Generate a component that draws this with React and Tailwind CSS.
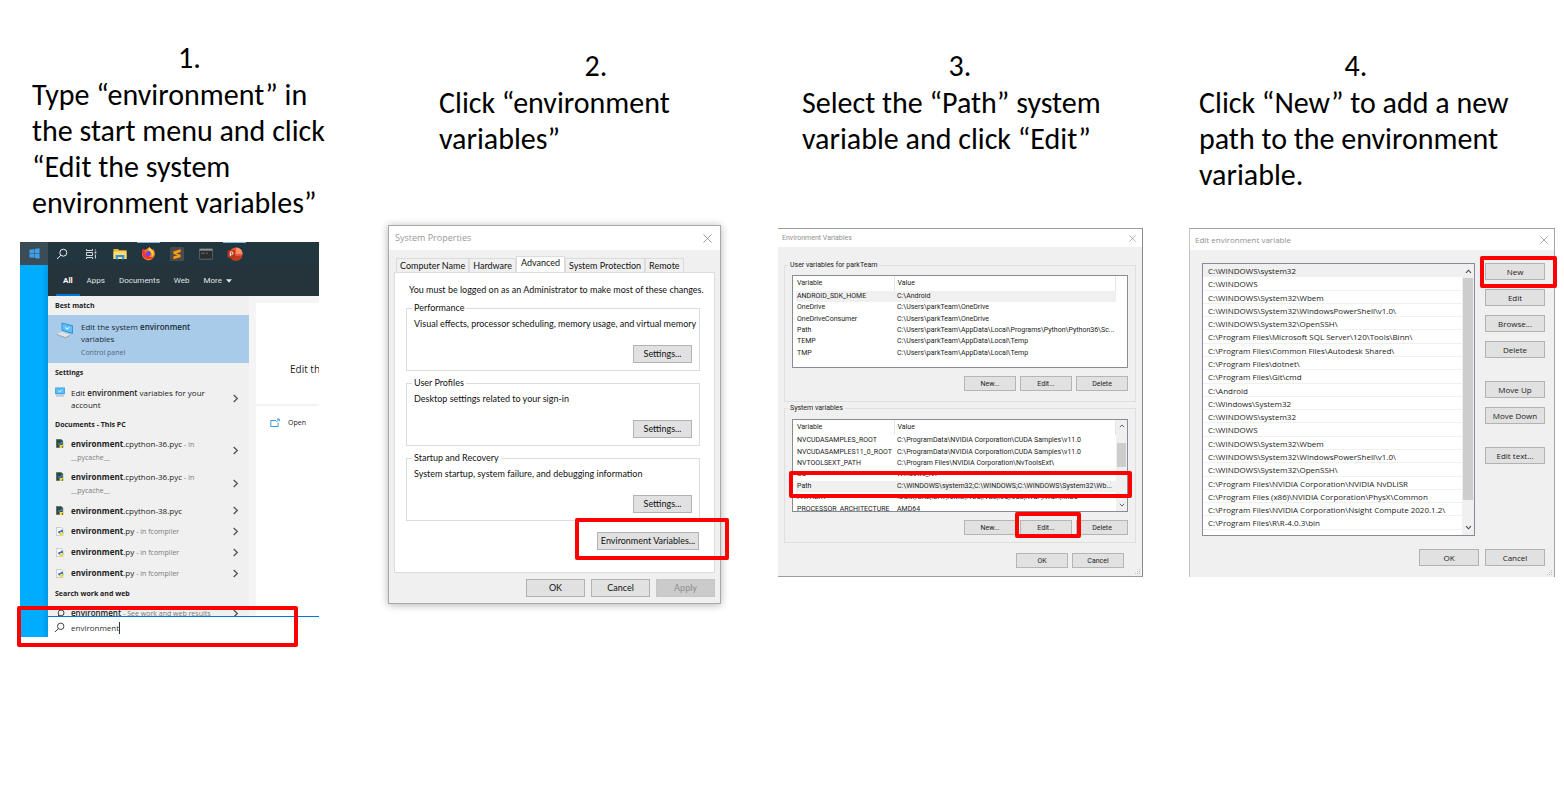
import React from 'react';

const RED = 'pointer-events-none absolute rounded-xs border-4 border-[#fe0000]';

function Caption({ number, className, children }) {
  return (
    <div className={`font-['Carlito','Lato',sans-serif] text-[30px] leading-9 text-black ${className}`}>
      <p className="pb-px text-center">{number}</p>
      <p className="whitespace-nowrap">{children}</p>
    </div>
  );
}

function Close({ className = '' }) {
  return (
    <button type="button" aria-label="Close" className={`text-[#8a8a8a] ${className}`}>
      <svg viewBox="0 0 10 10" className="block size-full" fill="none" stroke="currentColor" strokeWidth="0.9">
        <path d="M0.5 0.5 9.5 9.5M9.5 0.5 0.5 9.5" />
      </svg>
    </button>
  );
}

function Chevron({ dir, className }) {
  const paths = { right: 'M3 1l4 4-4 4', up: 'M1.5 7 5 3.2 8.5 7', down: 'M1.5 3 5 6.8 8.5 3' };
  return (
    <svg viewBox="0 0 10 10" className={`shrink-0 ${className}`} fill="none" stroke="currentColor" strokeWidth="1.5">
      <path d={paths[dir]} />
    </svg>
  );
}

function Grip() {
  return (
    <svg viewBox="0 0 8 8" className="absolute right-0 bottom-0 size-2" fill="#bdbdbd">
      <path d="M5 5h1v1H5zM3 5h1v1H3zM1 5h1v1H1zM5 3h1v1H5zM3 3h1v1H3zM5 1h1v1H5z" />
    </svg>
  );
}

function Magnifier({ className }) {
  return (
    <svg viewBox="0 0 12 12" className={`shrink-0 ${className}`} fill="none" stroke="currentColor" strokeWidth="1">
      <circle cx="7.3" cy="4.7" r="3.5" />
      <path d="M4.8 7.2 1 11" />
    </svg>
  );
}

/* ---------- Start menu ---------- */

function WindowsLogo() {
  return (
    <svg viewBox="0 0 12 12" className="size-[11px]" fill="#3ea0ea">
      <path d="M0.5 2 5.4 1.3V5.7H0.5zM6 1.2 11.5 0.4V5.7H6zM0.5 6.3H5.4V10.7L0.5 10zM6 6.3H11.5V11.6L6 10.8z" />
    </svg>
  );
}

function TaskView() {
  return (
    <svg viewBox="0 0 12 12" className="size-3" fill="none" stroke="#d5dadd" strokeWidth="1">
      <path d="M1.5 1v1.5h6V1M1.5 4.5h6v3h-6zM1.5 11V9.5h6V11" />
      <path d="M10.4 1.5v1M10.4 6.5v4" />
      <path d="M9.6 4.5h1.7" strokeWidth="1.8" />
    </svg>
  );
}

function Folder() {
  return (
    <svg viewBox="0 0 14 12" className="h-3 w-[14px]">
      <path d="M0.5 1h4.6l1 1.2h7.4V11H0.5z" fill="#f3b52d" />
      <path d="M0.5 3.4h13V11H0.5z" fill="#ffdc75" />
      <path d="M2.7 7h8.6v4.4H9.2V9H4.8v2.4H2.7z" fill="#2d8fe0" />
    </svg>
  );
}

function Firefox() {
  return (
    <svg viewBox="0 0 16 16" className="size-[15px]">
      <path d="M8.8 0.8c0.8 1.6 2.6 2 3.4 3.6 0.4-0.4 0.4-1 0.2-1.5 2 1.8 2.8 4.6 2.2 7A6.9 6.9 0 0 1 1 8.4C1 6 1.6 4 2.8 2.8c0 0.8 0.2 1.2 0.6 1.5C4 3.8 4.8 3.6 5.6 3.9 6.6 2.2 8.5 2.2 8.8 0.8z" fill="#ff8a1e" />
      <path d="M1.2 7.5C1.4 5 2 3.6 2.8 2.8c0 0.8 0.2 1.2 0.6 1.5L5 7l5 5 3.2-0.4A6.9 6.9 0 0 1 1.2 7.5z" fill="#f5333f" />
      <path d="M9 1.2c0.8 1.6 2.6 2 3.4 3.6 1.4 2 1.6 4.4-0.2 6.6C12 7 9 6.6 8 4.6 7.8 3.6 8.6 2.6 9 1.2z" fill="#ffd43a" />
      <circle cx="7.6" cy="8" r="2.9" fill="#7542e5" />
      <path d="M3.6 5.2c1.2-0.6 2.4 0 3.8 0.2 0.2 1-1.4 1.1-1.8 1.9-0.2 0.6 0 1-0.6 1.4C4.2 8.2 3.4 6.6 3.6 5.2z" fill="#ff5a2c" />
    </svg>
  );
}

function Sublime() {
  return (
    <svg viewBox="0 0 14 14" className="size-[14px]">
      <rect width="14" height="14" rx="1.5" fill="#4b4b4b" />
      <path d="M3.4 4.6 10.6 2.3V5L6.2 6.4l4.4 1.3v2.4L3.4 12.2V9.6L7.6 8.3 3.4 7z" fill="#ff9c12" />
    </svg>
  );
}

function Terminal() {
  return (
    <svg viewBox="0 0 14 12" className="h-3 w-[14px]">
      <rect x="0.3" y="0.8" width="13.4" height="10.4" rx="0.6" fill="#2a2c2e" stroke="#83898d" strokeWidth="0.6" />
      <path d="M0.6 1.1h12.8v1.5H0.6z" fill="#9aa0a4" />
      <path d="M2 5.2h4M7 5.2h2" stroke="#7c8286" strokeWidth="0.8" />
    </svg>
  );
}

function PowerPoint() {
  return (
    <svg viewBox="0 0 16 14" className="h-[14px] w-4">
      <circle cx="9" cy="7" r="6.6" fill="#e2583a" />
      <path d="M9 0.4A6.6 6.6 0 0 1 15.6 7H9z" fill="#ff8f6b" />
      <path d="M2.8 9h12.5A6.6 6.6 0 0 1 9 13.6 6.6 6.6 0 0 1 2.8 9z" fill="#c13a1e" />
      <rect x="0.5" y="3.2" width="7.6" height="7.6" rx="0.7" fill="#b7331a" />
      <path d="M3.3 9.2V4.9h1.4a1.25 1.25 0 0 1 0 2.7H3.3" fill="none" stroke="#fff" strokeWidth="0.9" />
    </svg>
  );
}

function SystemIcon() {
  return (
    <svg viewBox="0 0 18 18" className="size-[18px] shrink-0">
      <path d="M5.6 1.5 16.8 4.5V13L5.6 9.6z" fill="#2187d0" />
      <path d="M6.4 2.6 16 5.2v6.6L6.4 9z" fill="#5cc1fb" />
      <path d="M9.5 6.3 11 8.2l2.6-2" fill="none" stroke="#fff" strokeWidth="1" />
      <path d="M0.6 13 5.4 11l8.8 2.8-4.6 2.4z" fill="#e2e2e2" />
      <path d="M0.6 13 9.6 16.2 14.2 13.8v1L9.6 17.4 0.6 14z" fill="#a3a7aa" />
    </svg>
  );
}

function MonitorIcon() {
  return (
    <svg viewBox="0 0 10 10" className="size-[10px] shrink-0">
      <rect x="0.2" y="0.5" width="9.6" height="6.8" fill="#2b94de" />
      <rect x="0.9" y="1.2" width="8.2" height="5.2" fill="#57bdf8" />
      <path d="M3.2 3.8 4.6 5.2 7 2.6" fill="none" stroke="#fff" strokeWidth="0.9" />
      <path d="M1 8.4h8v1H1z" fill="#a5abb0" />
    </svg>
  );
}

function PythonFile({ dark }) {
  return (
    <svg viewBox="0 0 8 9" className="ml-[1px] h-[9px] w-2 shrink-0">
      <path d="M0.4 0.4h4.8l1.6 1.6v6.6H0.4z" fill={dark ? '#2f4a3d' : '#fafafa'} stroke={dark ? '#2f4a3d' : '#9a9fa3'} strokeWidth="0.5" />
      <path d="M4.6 2.8h1.6c0.6 0 0.8 0.4 0.8 1v1.4H5c-0.8 0-1 0.4-1 1.2H3c-0.6 0-0.8-0.6-0.8-1.4S2.4 4 3 4h1.6z" fill="#3b79b3" />
      <path d="M7 4.6h0.4c0.4 0 0.6 0.5 0.6 1.3S7.8 7 7.4 7H6v1.2c0 0.5-0.4 0.8-1 0.8H4.4c-0.6 0-0.8-0.4-0.8-1V6.8c0-0.6 0.4-0.8 1-0.8H6c0.6 0 1-0.4 1-1z" fill="#ffd63f" />
    </svg>
  );
}

const TASKBAR = [
  { label: 'Search', icon: <Magnifier className="size-3 text-[#e8ecee]" /> },
  { label: 'Task View', icon: <TaskView /> },
  { label: 'File Explorer', icon: <Folder /> },
  { label: 'Firefox', icon: <Firefox />, active: true },
  { label: 'Sublime Text', icon: <Sublime /> },
  { label: 'Command Prompt', icon: <Terminal /> },
  { label: 'PowerPoint', icon: <PowerPoint />, active: true },
];

function Heading({ children }) {
  return <h3 className="flex h-[19px] items-center pt-[1px] pl-[7px] text-[7px] font-bold text-[#222]">{children}</h3>;
}

function Result({ icon, tall, children }) {
  return (
    <button type="button" className={`flex w-full items-center pr-[9px] pl-[7px] text-left text-[8px] leading-3 text-[#222] ${tall ? 'h-[33px]' : 'h-[21px]'}`}>
      <span className={`w-4 shrink-0 ${tall ? 'self-start pt-[5px]' : ''}`}>{icon}</span>
      <span className="min-w-0 flex-1">{children}</span>
      <Chevron dir="right" className="size-[9px] text-[#555]" />
    </button>
  );
}

function Muted({ children }) {
  return <span className="text-[7px] text-[#7b7b7b]">{children}</span>;
}

function StartMenu() {
  return (
    <div className="relative mr-[69px] font-['Open_Sans','Noto_Sans',sans-serif]">
      <div className="flex h-[395px] flex-col overflow-hidden bg-white">
        <div className="flex h-[23px] shrink-0 bg-[#223640]">
          <button type="button" aria-label="Start" className="flex w-7 items-center justify-center bg-[#3b4c56]">
            <WindowsLogo />
          </button>
          <div className="grid w-[201px] grid-cols-7">
            {TASKBAR.map((t) => (
              <button key={t.label} type="button" aria-label={t.label} className="relative flex items-center justify-center">
                {t.active && <span className="absolute inset-x-[3px] top-0 h-px bg-[#79b9ec]" />}
                {t.icon}
              </button>
            ))}
          </div>
        </div>
        <div className="flex min-h-0 flex-1">
          <div className="w-7 shrink-0 bg-linear-to-r from-[#00acfe] from-80% to-[#0399e4]" />
          <div className="flex min-w-0 flex-1 flex-col">
            <div className="flex h-[31px] shrink-0 items-center gap-[14px] bg-[#25333b] pl-[15px] font-['Roboto',sans-serif] text-[8px] text-[#dfe3e5]">
              <button type="button" className="relative flex h-full items-center font-bold text-white">
                All
                <span className="absolute -inset-x-[7px] bottom-0 h-[2px] bg-[#0078d7]" />
              </button>
              <button type="button">Apps</button>
              <button type="button">Documents</button>
              <button type="button">Web</button>
              <button type="button" className="flex items-center gap-1">
                More
                <svg viewBox="0 0 6 4" className="h-1 w-[6px]" fill="currentColor"><path d="M0 0.2h6L3 3.8z" /></svg>
              </button>
            </div>
            <div className="flex min-h-0 flex-1">
              <div className="w-[201px] shrink-0 overflow-hidden bg-[#f0f0f0]">
                <Heading>Best match</Heading>
                <button type="button" className="flex h-12 w-full bg-[#a7cbe8] pt-[6px] pl-2 text-left text-[8px] leading-3 text-[#1c2a35]">
                  <SystemIcon />
                  <span className="pl-[7px]">
                    Edit the system <b className="font-semibold">environment</b>
                    <br />
                    variables
                    <span className="block pt-[2px] text-[7px] text-[#53687a]">Control panel</span>
                  </span>
                </button>
                <Heading>Settings</Heading>
                <Result tall icon={<MonitorIcon />}>
                  Edit <b className="font-semibold">environment</b> variables for your
                  <br />
                  account
                </Result>
                <Heading>Documents - This PC</Heading>
                {[0, 1].map((i) => (
                  <Result key={i} tall icon={<PythonFile dark />}>
                    <b className="font-bold">environment</b><span className="font-medium">.cpython-36.pyc</span> <Muted>- in</Muted>
                    <br />
                    <Muted>__pycache__</Muted>
                  </Result>
                ))}
                <Result icon={<PythonFile dark />}>
                  <b className="font-bold">environment</b><span className="font-medium">.cpython-38.pyc</span>
                </Result>
                {[0, 1, 2].map((i) => (
                  <Result key={i} icon={<PythonFile />}>
                    <b className="font-bold">environment</b><span className="font-medium">.py</span> <Muted>- in fcompiler</Muted>
                  </Result>
                ))}
                <Heading>Search work and web</Heading>
                <Result icon={<Magnifier className="size-[10px]" />}>
                  <b className="font-semibold">environment</b> <Muted>- See work and web results</Muted>
                </Result>
              </div>
              <div className="flex min-w-0 flex-1 flex-col bg-[#f5f5f5] pt-[7px] pl-[7px] text-[#222]">
                <div className="flex-1 bg-white">
                  <div className="h-[103px] overflow-hidden border-b-2 border-[#f3f3f3] pt-[58px] pl-[34px] text-[10px] leading-4 whitespace-nowrap">
                    Edit th
                  </div>
                  <button type="button" className="flex items-center gap-2 pt-[11px] pl-[14px] text-[7px] leading-3">
                    <svg viewBox="0 0 10 10" className="size-[10px]" fill="none" stroke="#2a8fdd" strokeWidth="0.9">
                      <path d="M6 2.5H0.8v6h7.4V4.5M6.5 4 9 1.3M7 1h2.3v2.3" />
                    </svg>
                    Open
                  </button>
                </div>
              </div>
            </div>
            <div className="flex h-[21px] shrink-0 items-center border-t border-[#0078d7] bg-white pt-[1px] pl-[6px] text-[#333]">
              <Magnifier className="mr-[6px] size-[11px]" />
              <input aria-label="Search" defaultValue="environment" className="field-sizing-content border-r border-[#333] text-[8px] leading-3 outline-none" />
            </div>
          </div>
        </div>
      </div>
      <span className={`${RED} -bottom-[10px] -left-[3px] h-[41px] w-[281px]`} />
    </div>
  );
}

/* ---------- System Properties ---------- */

function SysButton({ className = 'w-[59px]', disabled, children }) {
  return (
    <button
      type="button"
      disabled={disabled}
      className={`h-[18px] shrink-0 border text-[9px] leading-3 ${disabled ? 'border-[#c6c6c6] bg-[#cbcbcb] text-[#8f8f8f]' : 'border-[#b2b2b2] bg-[#e1e1e1] text-[#111]'} ${className}`}
    >
      {children}
    </button>
  );
}

const GROUPS = [
  ['Performance', 'Visual effects, processor scheduling, memory usage, and virtual memory'],
  ['User Profiles', 'Desktop settings related to your sign-in'],
  ['Startup and Recovery', 'System startup, system failure, and debugging information'],
];

const TABS = ['Computer Name', 'Hardware', 'Advanced', 'System Protection', 'Remote'];

function SystemProperties() {
  return (
    <div className="mr-[57px] border border-[#a9a9a9] bg-[#f0f0f0] font-['Lato',Arial,sans-serif] text-[9px] leading-3 text-[#111] shadow-[0_1px_8px_rgba(0,0,0,0.3)]">
      <div className="flex h-6 items-center justify-between bg-white pr-2 pl-[6px]">
        <h2 className="font-['Open_Sans',sans-serif] text-[9px] text-[#9a9a9a]">System Properties</h2>
        <Close className="size-[9px]" />
      </div>
      <div className="px-[5px] pt-[6px] pb-[6px]">
        <div role="tablist" className="flex items-end pl-[2px]">
          {TABS.map((t) => (
            <button
              key={t}
              type="button"
              role="tab"
              aria-selected={t === 'Advanced'}
              className={`border border-b-0 border-[#dcdcdc] ${t === 'Advanced' ? 'h-4 bg-white px-1 pb-1' : 'h-[14px] bg-[#f0f0f0] px-[3px]'}`}
            >
              {t}
            </button>
          ))}
        </div>
        <div role="tabpanel" className="border border-[#dcdcdc] bg-white px-[11px] pt-[11px] pb-[22px]">
          <p className="px-[3px] whitespace-nowrap">You must be logged on as an Administrator to make most of these changes.</p>
          <div className="flex flex-col gap-[6px] pt-[6px] pr-[3px]">
            {GROUPS.map(([title, text]) => (
              <fieldset key={title} className="h-[69px] min-w-0 border border-[#dcdcdc] px-[7px]">
                <legend className="-ml-[2px] px-[2px]">{title}</legend>
                <p className="pt-1 whitespace-nowrap">{text}</p>
                <div className="flex justify-end pt-[15px]">
                  <SysButton>Settings...</SysButton>
                </div>
              </fieldset>
            ))}
          </div>
          <div className="flex justify-end pt-[11px] pr-1">
            <div className="relative flex">
              <SysButton className="w-[102px]">Environment Variables...</SysButton>
              <span className={`${RED} -top-[14px] -left-[22px] h-[42px] w-[154px]`} />
            </div>
          </div>
        </div>
        <div className="flex justify-end gap-[6px] pt-[6px]">
          <SysButton>OK</SysButton>
          <SysButton>Cancel</SysButton>
          <SysButton disabled>Apply</SysButton>
        </div>
      </div>
    </div>
  );
}

/* ---------- Environment Variables ---------- */

const USER_VARS = [
  ['ANDROID_SDK_HOME', 'C:\\Android'],
  ['OneDrive', 'C:\\Users\\parkTeam\\OneDrive'],
  ['OneDriveConsumer', 'C:\\Users\\parkTeam\\OneDrive'],
  ['Path', 'C:\\Users\\parkTeam\\AppData\\Local\\Programs\\Python\\Python36\\Sc...'],
  ['TEMP', 'C:\\Users\\parkTeam\\AppData\\Local\\Temp'],
  ['TMP', 'C:\\Users\\parkTeam\\AppData\\Local\\Temp'],
];

const SYSTEM_VARS = [
  ['NVCUDASAMPLES_ROOT', 'C:\\ProgramData\\NVIDIA Corporation\\CUDA Samples\\v11.0'],
  ['NVCUDASAMPLES11_0_ROOT', 'C:\\ProgramData\\NVIDIA Corporation\\CUDA Samples\\v11.0'],
  ['NVTOOLSEXT_PATH', 'C:\\Program Files\\NVIDIA Corporation\\NvToolsExt\\'],
  ['OS', 'Windows_NT'],
  ['Path', 'C:\\WINDOWS\\system32;C:\\WINDOWS;C:\\WINDOWS\\System32\\Wb...'],
  ['PATHEXT', '.COM;.EXE;.BAT;.CMD;.VBS;.VBE;.JS;.JSE;.WSF;.WSH;.MSC'],
  ['PROCESSOR_ARCHITECTURE', 'AMD64'],
];

function EnvButton({ children }) {
  return (
    <button type="button" className="h-[15px] w-[52px] border border-[#b5b5b5] bg-[#e1e1e1] text-[7px] leading-3">
      {children}
    </button>
  );
}

function VarTable({ rows, selected, tableClass, scroll, label }) {
  return (
    <div className="relative flex h-[93px] border border-[#868b94] bg-white">
      <div className="min-w-0 flex-1 overflow-hidden pl-[3px]">
        <table aria-label={label} className={`w-full table-fixed border-collapse text-left whitespace-nowrap ${tableClass}`}>
          <thead>
            <tr className="h-[15px]">
              <th className="w-[98px] border-r border-[#e5e5e5] p-0 pl-px font-normal">Variable</th>
              <th className="border-r border-[#e5e5e5] p-0 pl-[3px] font-normal">Value</th>
            </tr>
          </thead>
          <tbody>
            {rows.map(([k, v]) => (
              <tr key={k} className={k === selected ? 'bg-[#f0f0f0]' : ''}>
                <td className="p-0 pl-px">{k}</td>
                <td className="p-0 pl-[3px]">{v}</td>
              </tr>
            ))}
          </tbody>
        </table>
      </div>
      <div className={`flex w-[11px] shrink-0 flex-col items-center justify-between py-[3px] text-[#555] ${scroll ? 'bg-[#f0f0f0]' : ''}`}>
        {scroll && (
          <>
            <Chevron dir="up" className="size-[6px]" />
            <span className="mb-[22px] h-6 w-[9px] bg-[#cdcdcd]" />
            <Chevron dir="down" className="size-[6px]" />
          </>
        )}
      </div>
      {scroll && <span className={`${RED} -right-[5px] -left-1 top-[51px] h-[27px]`} />}
    </div>
  );
}

function EnvironmentVariables() {
  return (
    <div className="relative mr-[46px] h-[349px] border-t border-r border-b border-t-[#9c9c9c] border-r-[#8a8a8a] border-b-[#9c9c9c] bg-[#f0f0f0] font-['Roboto','Open_Sans',sans-serif] text-[7px] leading-[11px] text-[#222]">
      <div className="flex h-[18px] items-center justify-between bg-white pr-[6px] pl-1">
        <h2 className="text-[#8f8f8f]">Environment Variables</h2>
        <Close className="size-[7px]" />
      </div>
      <div className="px-[6px] pt-[13px]">
        <fieldset className="h-[142px] border border-[#dfdfdf] px-[7px]">
          <legend className="-ml-1 px-[2px]">User variables for parkTeam</legend>
          <div className="pt-[4px]">
            <VarTable rows={USER_VARS} selected="ANDROID_SDK_HOME" tableClass="h-[83px]" label="User variables" />
          </div>
          <div className="flex justify-end gap-1 pt-2">
            <EnvButton>New...</EnvButton>
            <EnvButton>Edit...</EnvButton>
            <EnvButton>Delete</EnvButton>
          </div>
        </fieldset>
        <fieldset className="mt-[1px] h-[140px] border border-[#dfdfdf] px-[7px]">
          <legend className="-ml-1 px-[2px]">System variables</legend>
          <div className="pt-[5px]">
            <VarTable rows={SYSTEM_VARS} selected="Path" tableClass="h-[95px]" scroll label="System variables" />
          </div>
          <div className="flex justify-end gap-1 pt-2">
            <EnvButton>New...</EnvButton>
            <span className="relative flex">
              <EnvButton>Edit...</EnvButton>
              <span className={`${RED} -right-[9px] -left-[5px] -top-2 h-[26px]`} />
            </span>
            <EnvButton>Delete</EnvButton>
          </div>
        </fieldset>
        <div className="flex justify-end gap-1 pt-[10px] pr-3">
          <EnvButton>OK</EnvButton>
          <EnvButton>Cancel</EnvButton>
        </div>
      </div>
      <Grip />
    </div>
  );
}

/* ---------- Edit environment variable ---------- */

const PATHS = [
  'C:\\WINDOWS\\system32',
  'C:\\WINDOWS',
  'C:\\WINDOWS\\System32\\Wbem',
  'C:\\WINDOWS\\System32\\WindowsPowerShell\\v1.0\\',
  'C:\\WINDOWS\\System32\\OpenSSH\\',
  'C:\\Program Files\\Microsoft SQL Server\\120\\Tools\\Binn\\',
  'C:\\Program Files\\Common Files\\Autodesk Shared\\',
  'C:\\Program Files\\dotnet\\',
  'C:\\Program Files\\Git\\cmd',
  'C:\\Android',
  'C:\\Windows\\System32',
  'C:\\WINDOWS\\system32',
  'C:\\WINDOWS',
  'C:\\WINDOWS\\System32\\Wbem',
  'C:\\WINDOWS\\System32\\WindowsPowerShell\\v1.0\\',
  'C:\\WINDOWS\\System32\\OpenSSH\\',
  'C:\\Program Files\\NVIDIA Corporation\\NVIDIA NvDLISR',
  'C:\\Program Files (x86)\\NVIDIA Corporation\\PhysX\\Common',
  'C:\\Program Files\\NVIDIA Corporation\\Nsight Compute 2020.1.2\\',
  'C:\\Program Files\\R\\R-4.0.3\\bin',
  'C:\\Program Files\\NVIDIA GPU Computing Toolkit\\CUDA\\v11.0\\',
];

function EditButton({ className = '', children }) {
  return (
    <button type="button" className={`h-[17px] w-[60px] border border-[#b2b2b2] bg-[#e1e1e1] text-[8px] leading-3 ${className}`}>
      {children}
    </button>
  );
}

function EditVariable() {
  return (
    <div className="relative mr-[9px] h-[349px] border border-b-0 border-[#a3a3a3] border-l-[#c4c4c4] bg-[#f0f0f0] font-['Open_Sans','Noto_Sans',sans-serif] text-[8px] leading-3 text-[#222]">
      <div className="flex h-[21px] items-center justify-between bg-white pr-[6px] pl-[5px]">
        <h2 className="text-[#8f8f8f]">Edit environment variable</h2>
        <Close className="size-2" />
      </div>
      <div className="flex gap-[10px] pt-[13px] pr-[9px] pl-3">
        <div className="flex h-[273px] min-w-0 flex-1 border border-[#868b94] bg-white">
          <ul className="flex h-[279px] min-w-0 flex-1 flex-col self-start leading-[14px] [clip-path:inset(0_0_8px_0)]">
            {PATHS.map((p, i) => (
              <li key={i} className={`min-h-0 flex-1 basis-0 border-b border-[#f0f0f0] pl-[5px] whitespace-nowrap ${i === 0 ? 'bg-[#f0f0f0]' : ''}`}>
                {p}
              </li>
            ))}
          </ul>
          <div className="flex w-3 flex-col items-center bg-[#f0f0f0] py-1 text-[#444]">
            <Chevron dir="up" className="size-[7px]" />
            <span className="mt-[3px] mb-auto h-[222px] w-[10px] bg-[#cdcdcd]" />
            <Chevron dir="down" className="size-[7px]" />
          </div>
        </div>
        <div className="flex flex-col gap-[9px]">
          <span className="relative flex">
            <EditButton>New</EditButton>
            <span className={`${RED} -top-[7px] -left-[5px] h-8 w-[77px]`} />
          </span>
          <EditButton>Edit</EditButton>
          <EditButton>Browse...</EditButton>
          <EditButton>Delete</EditButton>
          <EditButton className="mt-[14px]">Move Up</EditButton>
          <EditButton>Move Down</EditButton>
          <EditButton className="mt-[14px]">Edit text...</EditButton>
        </div>
      </div>
      <div className="flex justify-end gap-[6px] pt-[13px] pr-[9px]">
        <EditButton>OK</EditButton>
        <EditButton>Cancel</EditButton>
      </div>
      <Grip />
    </div>
  );
}

export default function App() {
  return (
    <main className="grid min-h-screen grid-cols-[minmax(0,368fr)_minmax(0,390fr)_minmax(0,411fr)_minmax(0,375fr)] items-start bg-white pl-5">
      <section>
        <Caption number="1." className="min-h-[242px] pt-10 pr-[41px] pl-3">
          Type “environment” in<br />the start menu and click<br />“Edit the system<br />environment variables”
        </Caption>
        <StartMenu />
      </section>
      <section>
        <Caption number="2." className="min-h-[225px] pt-12 pr-[25px] pl-[51px]">
          Click “environment<br />variables”
        </Caption>
        <SystemProperties />
      </section>
      <section>
        <Caption number="3." className="min-h-[228px] pt-12 pr-[71px] pl-6">
          Select the “Path” system<br />variable and click “Edit”
        </Caption>
        <EnvironmentVariables />
      </section>
      <section>
        <Caption number="4." className="min-h-[228px] pt-12 pr-[51px] pl-[10px]">
          Click “New” to add a new<br />path to the environment<br />variable.
        </Caption>
        <EditVariable />
      </section>
    </main>
  );
}
